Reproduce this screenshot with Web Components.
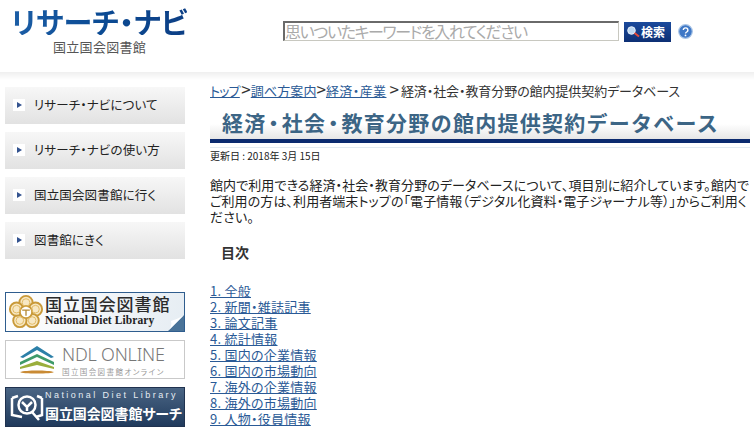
<!DOCTYPE html>
<html lang="ja"><head><meta charset="utf-8"><title>リサーチ・ナビ</title>
<style>
html,body{margin:0;padding:0;background:#fff;height:431px;overflow:hidden}
body{font-family:"Noto Sans CJK JP","Noto Sans",sans-serif;font-feature-settings:"palt";color:#222;font-size:14px}
</style></head><body>
<ndl-page>
  <ndl-header slot="header"></ndl-header>
  <ndl-sidebar slot="side">
    <ndl-nav-item>リサーチ・ナビについて</ndl-nav-item>
    <ndl-nav-item>リサーチ・ナビの使い方</ndl-nav-item>
    <ndl-nav-item>国立国会図書館に行く</ndl-nav-item>
    <ndl-nav-item>図書館にきく</ndl-nav-item>
    <ndl-banners></ndl-banners>
  </ndl-sidebar>
  <ndl-main slot="main"></ndl-main>
</ndl-page>
<script>
const def=(name,html)=>customElements.define(name,class extends HTMLElement{
  constructor(){super();this.attachShadow({mode:'open'}).innerHTML=html;}
});
def('ndl-page',`<style>
:host{display:block;width:754px;height:431px;overflow:hidden}
.body{display:grid;grid-template-columns:210px 540px;height:351px;
 padding-top:7px;box-sizing:border-box}
.top{height:72px}
.sh{height:8px;background:linear-gradient(#efefef,#fff)}
</style><div class="top"><slot name="header"></slot></div><div class="sh"></div>
<div class="body"><slot name="side"></slot><slot name="main"></slot></div>`);

def('ndl-header',`<style>
:host{display:flex;height:72px;position:relative}
.logo{width:283px;padding:7px 0 0 11px;box-sizing:border-box;display:flex;flex-direction:column}
.t{font-size:29px;line-height:28px;font-weight:700;letter-spacing:.1px;white-space:nowrap;
 background:linear-gradient(90deg,#1c5ea6,#0b4b94 50%,#0d3f85);-webkit-background-clip:text;background-clip:text;color:transparent;width:176px}
.s{font-size:13px;line-height:14px;letter-spacing:.3px;color:#555;margin:5px 0 0 42px;white-space:nowrap}
.search{display:flex;align-items:flex-start;padding-top:21px}
.in{width:336px;height:20px;box-sizing:border-box;border:1px solid #c8c8c0;border-top:2px solid #6a6a6a;border-left:2px solid #6a6a6a;
 font-size:16px;line-height:16px;color:#aaa;white-space:nowrap;letter-spacing:-1.4px;background:#fff}
.btn{margin:1px 0 0 5px;width:47px;height:20px;background:linear-gradient(#1a4a9c,#0d2f74);color:#fff;font-weight:700;font-size:12px;
 display:flex;align-items:center;gap:0;padding-left:2px;box-sizing:border-box;line-height:20px}
.help{margin:3px 0 0 7px;display:block}
</style>
<div class="logo"><div class="t">リサーチ・ナビ</div><div class="s">国立国会図書館</div></div>
<div class="search"><div class="in">思いついたキーワードを入れてください</div>
<div class="btn"><svg width="15" height="12" viewBox="0 0 15 12"><circle cx="5.5" cy="4.5" r="3.8" fill="#bcd8f2" stroke="#e8f0fa"/><path d="M8.5 7l4.5 3.5" stroke="#e64a3a" stroke-width="2"/></svg>検索</div>
<svg class="help" width="15" height="15" viewBox="0 0 15 15"><circle cx="7.5" cy="7.5" r="6.8" fill="#3f78c6" stroke="#a9c4e6" stroke-width="1.2"/><path d="M5.3 6a2.3 2.2 0 1 1 3.4 2c-.9.5-1.2.9-1.2 1.6" fill="none" stroke="#fff" stroke-width="1.4"/><circle cx="7.5" cy="11.4" r=".9" fill="#fff"/></svg>
</div>`);

def('ndl-sidebar',`<style>
:host{display:flex;flex-direction:column;gap:8px;padding-left:5px;width:180px}
</style><slot></slot>`);

def('ndl-nav-item',`<style>
:host{display:flex;align-items:center;width:180px;height:37px;box-sizing:border-box;padding-bottom:2px;background:linear-gradient(#f7f7f7,#e2e2e2);
 font-size:12.5px;color:#222;white-space:nowrap;letter-spacing:.15px}
.b{width:12px;height:12px;margin:0 9px 0 8px;background:#fff;display:flex;align-items:center;justify-content:center}
.b i{display:block;border-left:5px solid #33538f;border-top:3px solid transparent;border-bottom:3px solid transparent}
</style><span class="b"><i></i></span><slot></slot>`);

def('ndl-banners',`<style>
:host{display:flex;flex-direction:column;gap:8px;margin-top:25px;width:180px}
.b{height:40px;box-sizing:border-box;position:relative;overflow:hidden;white-space:nowrap}
.a{border:1px solid #2f5d8e;background:linear-gradient(100deg,#fff,#e6edf3);display:flex}
.a svg.f{margin:1px 0 0 2px;flex:none}
.a .t{padding-left:1px}
.a .j{font:500 17px/20px "Noto Sans CJK JP";letter-spacing:.9px;color:#2b2b2b;margin-top:1px}
.a .e{font:700 11.5px/13px "Liberation Serif";color:#222;letter-spacing:.1px}
.a .c{position:absolute;right:0;bottom:0}
.o{height:39px;border:1px solid #c9c9c9;background:#fff;display:flex}
.o svg{margin:4px 0 0 14px;flex:none}
.o .t{margin-left:8px}
.o .e{font:300 18px/21px "Noto Sans","Liberation Sans";color:#777;letter-spacing:-.2px;margin-top:3px}
.o .j{font-size:7.5px;line-height:10px;color:#999;letter-spacing:1.4px;margin-top:2px}
.s{border:1px solid #20324f;background:linear-gradient(#4a6584,#203a5c);display:flex;color:#fff}
.s svg{margin:4px 0 0 2px;flex:none}
.s>div{margin-left:-1px}
.s .e{font:9px/11px "Liberation Sans";letter-spacing:2.45px;color:#e6ecf2;margin:2px 0 0 0}
.s .j{font-size:14px;font-weight:700;line-height:21px;letter-spacing:-.1px;margin-top:2px}
</style>
<div class="b a"><svg class="f" width="36" height="36" viewBox="0 0 38 38"><g fill="#f7e8c4" stroke="#c99a3a" stroke-width="2"><circle cx="19" cy="9" r="7"/><circle cx="29" cy="16" r="7"/><circle cx="25.500" cy="28" r="7"/><circle cx="12.500" cy="28" r="7"/><circle cx="9" cy="16" r="7"/><circle cx="19" cy="19" r="6.500" fill="#fff"/></g><g fill="none" stroke="#e0b860"><circle cx="19" cy="9" r="4"/><circle cx="29" cy="16" r="4"/><circle cx="25.500" cy="28" r="4"/><circle cx="12.500" cy="28" r="4"/><circle cx="9" cy="16" r="4"/></g><path d="M15 17h8M19 17v6" stroke="#b58a35" stroke-width="1.400"/></svg>
<div class="t"><div class="j">国立国会図書館</div><div class="e">National Diet Library</div></div>
<svg class="c" width="16" height="16" viewBox="0 0 16 16"><path d="M16 0L0 16h16z" fill="#4a7398"/><path d="M16 0C12 3 6 5 3 6c1 3 0 7-3 10z" fill="#fff"/></svg></div>
<div class="b o"><svg width="34" height="30" viewBox="0 0 34 30"><path d="M0 12L17 1l17 11-3 1-14-8-14 8z" fill="#2c7fa8"/><path d="M0 17L17 9l17 8v3L17 12 0 20z" fill="#3f9a6a"/><path d="M0 22l17-6 17 6v2l-17-4-17 4z" fill="#9aae3c"/><path d="M0 27c6-2 28-2 34 0-1 2-33 2-34 0z" fill="#c98a34"/></svg>
<div class="t"><div class="e">NDL ONLINE</div><div class="j">国立国会図書館オンライン</div></div></div>
<div class="b s"><svg width="38" height="32" viewBox="0 0 38 32" fill="none" stroke="#fff" stroke-width="2.500"><path d="M4 6l6-2M34 6l-5-2M4 6v17l10 2M34 6v17l-6 2"/><circle cx="19" cy="13" r="8.500"/><path d="M14 10l5 5 5-5M19 15v4M24 20l7 8"/></svg>
<div><div class="e">National Diet Library</div><div class="j">国立国会図書館サーチ</div></div></div>`);

def('ndl-main',`<style>
:host{display:block;width:540px;position:relative}
a{color:#2a5a96;text-decoration:underline}
.crumb{font-size:13px;line-height:16px;margin-top:-6px;white-space:nowrap;color:#333}
.crumb a{letter-spacing:.1px}
.crumb a.n{letter-spacing:-.8px}
.crumb a.w{letter-spacing:.4px}
.crumb b{font-weight:400;font-size:17px;line-height:16px}
.crumb b.f{margin-left:1.5px}
.crumb b.l{margin:0 2px 0 3px}
.crumb span{letter-spacing:-.08px}
h1{margin:10px 0 0;height:34px;box-sizing:border-box;border-bottom:4px solid #0b2a6f;
 background:linear-gradient(#fff 0,#fff 50%,#e6e6e6);font-size:21px;line-height:27px;padding-left:12px;
 color:#3c6585;letter-spacing:1.26px;white-space:nowrap;font-weight:700;font-feature-settings:normal}
h1 span{margin:0 -3.5px}
.rule{height:1px;background:#e3ebf1;margin-top:4px}
.date{font-size:10px;line-height:14px;margin-top:1px;color:#222}
p{margin:14px 0 0;font-size:13px;line-height:16px;color:#222;letter-spacing:.08px}
h2{margin:17px 0 0 11px;font-size:14px;line-height:20px;font-weight:700;color:#333}
ol{list-style:none;margin:21px 0 0;padding:0;font-size:13px;line-height:16px;letter-spacing:.25px}
li{height:16px}
</style>
<div class="crumb"><a class="n" href="#">トップ</a><b class="f">&gt;</b><a href="#">調べ方案内</a><b>&gt;</b><a class="w" href="#">経済・産業</a><b class="l">&gt;</b><span>経済・社会・教育分野の館内提供契約データベース</span></div>
<h1>経済<span>・</span>社会<span>・</span>教育分野の館内提供契約データベース</h1>
<div class="rule"></div>
<div class="date">更新日 : 2018年 3月 15日</div>
<p>館内で利用できる経済・社会・教育分野のデータベースについて、項目別に紹介しています。館内でご利用の方は、利用者端末トップの「電子情報（デジタル化資料・電子ジャーナル等）」からご利用ください。</p>
<h2>目次</h2>
<ol>
<li><a href="#">1. 全般</a></li><li><a href="#">2. 新聞・雑誌記事</a></li><li><a href="#">3. 論文記事</a></li>
<li><a href="#">4. 統計情報</a></li><li><a href="#">5. 国内の企業情報</a></li><li><a href="#">6. 国内の市場動向</a></li>
<li><a href="#">7. 海外の企業情報</a></li><li><a href="#">8. 海外の市場動向</a></li><li><a href="#">9. 人物・役員情報</a></li>
</ol>`);
</script>
</body></html>
